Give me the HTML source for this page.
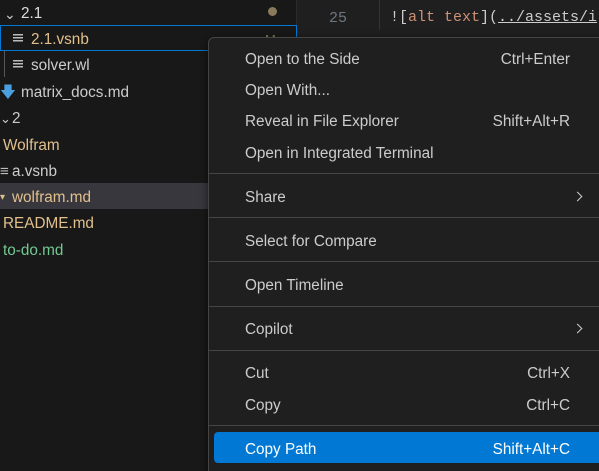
<!DOCTYPE html>
<html><head><meta charset="utf-8"><style>
*{margin:0;padding:0;box-sizing:border-box}
html,body{width:599px;height:471px;overflow:hidden}
body{background:#1f1f1f;position:relative;font-family:"Segoe UI","Liberation Sans",sans-serif;font-size:15.3px;color:#cccccc}
.a{position:absolute;white-space:nowrap;line-height:20px;margin-top:2px}
#side{position:absolute;left:0;top:0;width:297px;height:471px;background:#181818;border-right:1px solid #2b2b2b}
.sel{position:absolute;left:0;top:25px;width:297px;height:26px;border:1px solid #0078d4;background:#181818}
.hov{position:absolute;left:0;top:183px;width:297px;height:26px;background:#37373d}
.y{color:#e2c08d}.g{color:#73c991}
#menu{position:absolute;left:208px;top:37px;width:400px;height:440px;background:#1f1f1f;border:1px solid #454545;border-radius:6px;box-shadow:0 2px 8px rgba(0,0,0,.6)}
.sep{position:absolute;left:209px;width:390px;height:1px;background:#454545}
.m{color:#cccccc}
.k{right:29px;text-align:right}
.hl{position:absolute;left:214px;top:432px;width:400px;height:31px;background:#0078d4;border-radius:4px}
.arr{position:absolute;width:7px;height:7px;border-right:1.5px solid #ccc;border-top:1.5px solid #ccc;transform:rotate(45deg)}
.ic{position:absolute;width:10px;height:9px;background:repeating-linear-gradient(#bbb 0 1.5px,transparent 1.5px 3px)}
</style></head><body>
<div id="side"></div>
<div class="sel"></div>
<div class="hov"></div>
<div style="position:absolute;left:4px;top:51px;width:1px;height:26px;background:#585858"></div>
<div class="a" style="left:4px;top:2px;font-size:14px;color:#ccc">⌄</div>
<div class="a" style="left:21px;top:2px;color:#ddd">2.1</div>
<div style="position:absolute;left:268px;top:7px;width:9px;height:9px;border-radius:50%;background:#8a7a5c"></div>
<div class="ic" style="left:13px;top:34px"></div>
<div class="a y" style="left:31px;top:28px">2.1.vsnb</div>
<div class="a y" style="left:265px;top:28px;font-size:13px;color:#8a7a5c">M</div>
<div class="ic" style="left:13px;top:60px"></div>
<div class="a" style="left:31px;top:54px">solver.wl</div>
<div class="a" style="left:0px;top:81px;color:#4a9fe0">🡇</div>
<div class="a" style="left:21px;top:81px">matrix_docs.md</div>
<div class="a" style="left:0px;top:107px;font-size:13px">⌄</div>
<div class="a" style="left:12px;top:107px">2</div>
<div class="a y" style="left:3px;top:134px">Wolfram</div>
<div class="a" style="left:0px;top:160px;color:#bbb">≡</div>
<div class="a" style="left:12px;top:160px">a.vsnb</div>
<div class="a y" style="left:0px;top:186px;font-size:10px">▾</div>
<div class="a y" style="left:12px;top:186px">wolfram.md</div>
<div class="a y" style="left:3px;top:212px">README.md</div>
<div class="a g" style="left:3px;top:239px">to-do.md</div>

<div style="position:absolute;left:379px;top:0;width:1px;height:30px;background:#333"></div>
<div class="a" style="left:329px;top:7px;font-family:'Liberation Mono',monospace;font-size:15px;color:#6e7681">25</div>
<div class="a" style="left:390px;top:6px;font-family:'Liberation Mono',monospace;font-size:15px;color:#ccc">![<span style="color:#ce9178">alt text</span>](<span style="text-decoration:underline">../assets/i</span></div>

<div id="menu"></div>
<div class="sep" style="top:173px"></div>
<div class="sep" style="top:217px"></div>
<div class="sep" style="top:261px"></div>
<div class="sep" style="top:306px"></div>
<div class="sep" style="top:350px"></div>
<div class="sep" style="top:425px"></div>
<div class="hl"></div>

<div class="a m" style="left:245px;top:48px">Open to the Side</div><div class="a m k" style="top:48px">Ctrl+Enter</div>
<div class="a m" style="left:245px;top:79px">Open With...</div>
<div class="a m" style="left:245px;top:110px">Reveal in File Explorer</div><div class="a m k" style="top:110px">Shift+Alt+R</div>
<div class="a m" style="left:245px;top:142px">Open in Integrated Terminal</div>
<div class="a m" style="left:245px;top:186px">Share</div><div class="arr" style="left:574px;top:193px"></div>
<div class="a m" style="left:245px;top:230px">Select for Compare</div>
<div class="a m" style="left:245px;top:274px">Open Timeline</div>
<div class="a m" style="left:245px;top:318px">Copilot</div><div class="arr" style="left:574px;top:325px"></div>
<div class="a m" style="left:245px;top:362px">Cut</div><div class="a m k" style="top:362px">Ctrl+X</div>
<div class="a m" style="left:245px;top:394px">Copy</div><div class="a m k" style="top:394px">Ctrl+C</div>
<div class="a" style="left:245px;top:438px;color:#fff">Copy Path</div><div class="a k" style="top:438px;color:#fff">Shift+Alt+C</div>
</body></html>
